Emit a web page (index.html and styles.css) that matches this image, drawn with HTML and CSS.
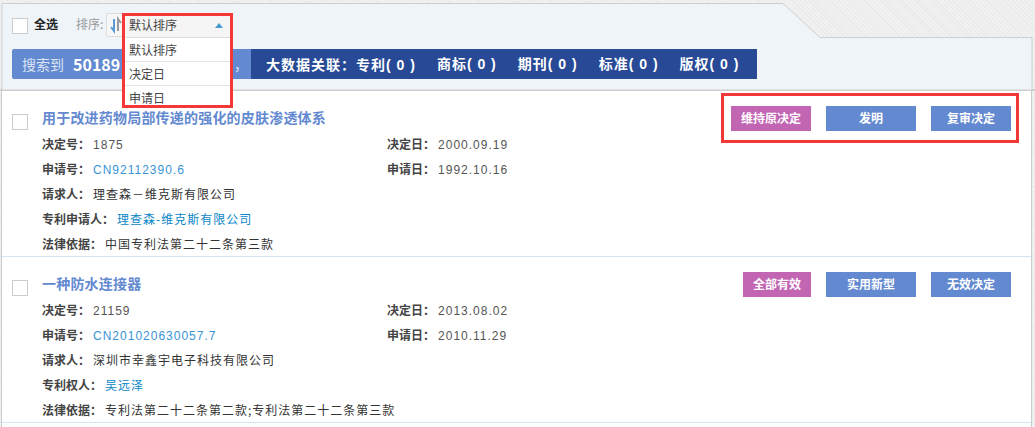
FILE: index.html
```html
<!DOCTYPE html>
<html lang="zh">
<head>
<meta charset="utf-8">
<title>复审决定</title>
<link rel="stylesheet" href="styles.css">
</head>
<body>
<div class="page">
  <header class="head">
    <svg class="tab" width="1035" height="90" viewBox="0 0 1035 90" aria-hidden="true">
      <path d="M2 90V3.5H783L820 37.5H1032V90Z" fill="#eff4f9" stroke="#cfcfcf"/>
    </svg>
    <div class="tools">
      <label class="all"><span class="check"></span><b>全选</b></label>
      <span class="sort-label">排序:</span>
      <span class="sort-icon">
        <svg width="14" height="18" viewBox="0 0 14 18"><path d="M4 3v12L1 11" fill="none" stroke="#5b9bd5" stroke-width="2"/><path d="M8 15V3l3 4" fill="none" stroke="#9a9a9a" stroke-width="2"/></svg>
      </span>
    </div>
    <div class="bar">
      <div class="found"><span>搜索到</span><b>50189</b><span class="comma">，</span></div>
      <div class="links">
        <b>大数据关联<i class="co">：</i>专利( 0 )</b><b>商标( 0 )</b><b>期刊( 0 )</b><b>标准( 0 )</b><b>版权( 0 )</b>
      </div>
    </div>
    <div class="dropdown">
      <div class="dd-head">默认排序<i class="caret"></i></div>
      <div class="dd-item">默认排序</div>
      <div class="dd-item">决定日</div>
      <div class="dd-item">申请日</div>
    </div>
  </header>

  <main class="list">
    <article class="item">
      <div class="title-row">
        <span class="check"></span>
        <h2>用于改进药物局部传递的强化的皮肤渗透体系</h2>
        <div class="tags"><span class="tag pink w80">维持原决定</span><span class="tag w90">发明</span><span class="tag w80">复审决定</span></div>
      </div>
      <div class="grid">
        <div><b>决定号<i class="co">：</i></b><span class="num">1875</span></div>
        <div><b>决定日<i class="co">：</i></b><span class="num">2000.09.19</span></div>
        <div><b>申请号<i class="co">：</i></b><span class="num blue">CN92112390.6</span></div>
        <div><b>申请日<i class="co">：</i></b><span class="num">1992.10.16</span></div>
        <div class="wide"><b>请求人<i class="co">：</i></b>理查森－维克斯有限公司</div>
        <div class="wide"><b>专利申请人<i class="co">：</i></b><a>理查森-维克斯有限公司</a></div>
        <div class="wide"><b>法律依据<i class="co">：</i></b>中国专利法第二十二条第三款</div>
      </div>
    </article>
    <article class="item">
      <div class="title-row">
        <span class="check"></span>
        <h2>一种防水连接器</h2>
        <div class="tags"><span class="tag pink w68">全部有效</span><span class="tag w90">实用新型</span><span class="tag w80">无效决定</span></div>
      </div>
      <div class="grid">
        <div><b>决定号<i class="co">：</i></b><span class="num">21159</span></div>
        <div><b>决定日<i class="co">：</i></b><span class="num">2013.08.02</span></div>
        <div><b>申请号<i class="co">：</i></b><span class="num blue">CN201020630057.7</span></div>
        <div><b>申请日<i class="co">：</i></b><span class="num">2010.11.29</span></div>
        <div class="wide"><b>请求人<i class="co">：</i></b>深圳市幸鑫宇电子科技有限公司</div>
        <div class="wide"><b>专利权人<i class="co">：</i></b><a>吴远泽</a></div>
        <div class="wide"><b>法律依据<i class="co">：</i></b>专利法第二十二条第二款;专利法第二十二条第三款</div>
      </div>
    </article>
  </main>
  <div class="callout"></div>
</div>
</body>
</html>
```
FILE: styles.css
```css
* { box-sizing: border-box; }
html, body { margin: 0; height: 100%; }
body {
  overflow: hidden;
  font: 12px/25px "Noto Sans CJK SC", "Liberation Sans", sans-serif;
  color: #333;
  background-color: #f1f1f1;
  background-image: repeating-linear-gradient(45deg, #e9e9e9 0 1px, transparent 1px 3px);
}
.page { position: relative; width: 1035px; height: 427px; }
.co { font-family: "Noto Sans CJK TC", sans-serif; font-style: normal; }

.head { position: relative; height: 91px; padding: 13px 0 0 12px; border-bottom: 2px solid #cfcfcf; }
.tab { position: absolute; left: 0; top: 0; }
.tools { position: relative; display: flex; align-items: center; height: 24px; line-height: 22px; }
.all { display: flex; align-items: center; gap: 6px; width: 64px; }
.all .check { margin-top: 2px; }
.all b { color: #222; font-size: 12px; margin-top: -2px; }
.check { display: block; flex: none; width: 16px; height: 16px; background: #fff; border: 1px solid #ccc; }
.sort-label { width: 30px; color: #999; margin-top: -2px; }
.sort-icon { display: flex; align-items: center; padding-left: 3px; width: 20px; height: 24px; background: #f7f7f7; border: 1px solid #ddd; border-radius: 2px; }

.bar { position: relative; display: flex; height: 30px; margin-top: 12px; color: #fff; line-height: 31px; }
.found { display: flex; gap: 9px; width: 239px; padding-left: 10px; background: #6389d0; border-radius: 2px 0 0 2px; font-size: 14px; color: #dbe4f5; white-space: nowrap; }
.found b { color: #fff; font-size: 16px; }
.comma { margin-left: auto; width: 17px; }
.links { display: flex; gap: 21px; width: 506px; padding-left: 15px; background: #284a96; font-family: "Liberation Sans", "Noto Sans CJK SC", sans-serif; font-size: 14px; letter-spacing: 1px; white-space: nowrap; }

.dropdown { position: absolute; left: 122px; top: 13px; width: 111px; height: 95px; border: 3px solid #f43838; background: #fff; color: #444; line-height: 23px; }
.dd-head { position: relative; height: 22px; padding-left: 4px; background: #f5f5f5; border-bottom: 1px solid #ddd; line-height: 18px; }
.dd-item { height: 24px; padding-left: 4px; border-bottom: 1px solid #e2e2e2; }
.dd-item:last-child { border-bottom: 0; }
.caret { position: absolute; right: 7px; top: 7px; border: 4px solid transparent; border-top: 0; border-bottom: 5px solid #4a9ad4; }

.list { margin: 0 3px 0 1px; background: #fff; border-left: 1px solid #ccc; border-right: 1px solid #ccc; height: 336px; }
.item { height: 166px; border-bottom: 1px solid #d5e4f1; padding: 13px 20px 0 10px; }
.title-row { display: flex; align-items: flex-start; height: 27px; }
.title-row .check { margin: 10px 14px 0 0; }
.title-row h2 { margin: 0; flex: 1; font-size: 14px; line-height: 26px; letter-spacing: .2px; color: #6389d0; font-weight: 700; }
.tags { display: flex; gap: 15px; margin-top: 2px; }
.tag { height: 25px; line-height: 23px; text-align: center; color: #fff; font-weight: 700; background: #6389d0; }
.pink { background: #c266b4; }
.w68 { width: 68px; } .w80 { width: 80px; } .w90 { width: 90px; }

.grid { display: grid; grid-template-columns: 345px 1fr; grid-auto-rows: 25px; padding-left: 30px; line-height: 25px; letter-spacing: 1px; color: #333; }
.grid .wide { grid-column: 1 / -1; }
.grid b { color: #444; letter-spacing: 0; margin-right: 3px; }
.num { font-family: "Liberation Sans", sans-serif; color: #555; }
.blue { color: #3a93d6; }
.grid a { color: #0a86c8; }
.callout { position: absolute; left: 721px; top: 93px; width: 298px; height: 50px; border: 3px solid #f43838; }
```
